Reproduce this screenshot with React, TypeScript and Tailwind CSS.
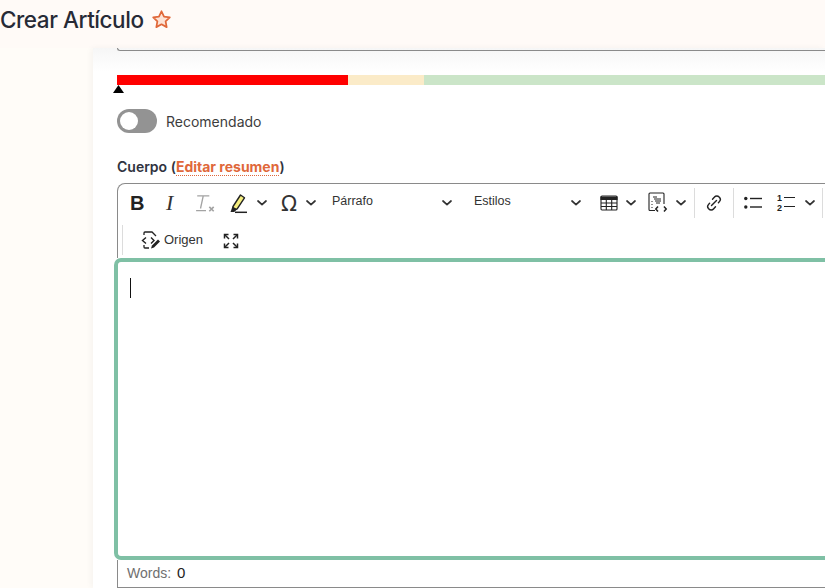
import React from "react";

const Chev = ({ className = "" }: { className?: string }) => (
  <svg width="10" height="6" viewBox="0 0 10 6" className={className} fill="none" stroke="#333" strokeWidth="1.7" strokeLinecap="round" strokeLinejoin="round">
    <path d="M1 1l4 3.6L9 1" />
  </svg>
);

const Sep = () => <div className="w-px h-[30px] bg-[#dcdcdc] shrink-0" />;

export default function App() {
  return (
    <div className="w-[825px] h-[588px] overflow-hidden flex flex-col bg-[#fffcf8] text-[#333] font-['Liberation_Sans',sans-serif]">
      <header className="h-[48px] shrink-0 bg-[#fffaf7] flex items-start gap-[8px] pt-[6px] font-['Inter',sans-serif]">
        <h1 className="text-[22.5px] leading-[27px] font-medium tracking-[-0.45px] text-[#272a36]">Crear Artículo</h1>
        <svg width="21" height="21" viewBox="0 0 24 24" className="mt-[3px] -ml-[0.5px]" fill="#fde3d6" stroke="#e0683a" strokeWidth="2" strokeLinejoin="round">
          <path d="M12 2.6l2.9 6 6.6.9-4.8 4.6 1.2 6.6L12 17.5l-5.9 3.2 1.2-6.6L2.5 9.5l6.6-.9z" />
        </svg>
      </header>
      <div className="flex-1 flex min-h-0">
        <div className="w-[93px] shrink-0" />
        <main className="flex-1 min-w-0 pl-[24px] flex flex-col shadow-[-2px_0_6px_rgba(0,0,0,0.04)] bg-gradient-to-b from-[#f6f6f6] to-white to-[24px]">
          <div className="h-[3px] w-[800px] border-b border-l border-[#8a8a8a] rounded-bl-[6px] shrink-0" />
          <div className="mt-[24px] flex h-[10px] w-[800px] shrink-0">
            <div className="w-[231px] bg-[#ff0000]" />
            <div className="w-[76px] bg-[#fbebc8]" />
            <div className="flex-1 bg-[#cbe5c8]" />
          </div>
          <svg width="11" height="8" viewBox="0 0 11 8" className="ml-[-4px] shrink-0"><path d="M5.5 0L11 8H0z" fill="#000" /></svg>
          <div className="mt-[16px] flex items-center gap-[9px] shrink-0">
            <div className="w-[40px] h-[24px] rounded-full bg-[#939393] flex items-center pl-[3px]">
              <div className="w-[18px] h-[18px] rounded-full bg-white" />
            </div>
            <span className="text-[14px] text-[#3d3d3d] font-['Inter',sans-serif]">Recomendado</span>
          </div>
          <div className="mt-[24px] text-[14px] leading-[20px] font-semibold text-[#2f3340] font-['Inter',sans-serif] shrink-0">
            Cuerpo (<span className="text-[#e0683a] font-bold border-b border-dotted border-[#e0683a]">Editar resumen</span>)
          </div>
          <div className="mt-[6px] w-[800px] shrink-0 flex flex-col">
            <div className="h-[75px] border border-b-0 border-[#8a8a8a] rounded-tl-[8px] flex flex-col">
              <div className="h-[38px] flex items-center text-[#333]">
                <span className="ml-[12px] w-[16px] text-[20px] font-bold text-[#222] leading-none">B</span>
                <span className="ml-[20px] w-[12px] font-['Liberation_Serif',serif] italic text-[22px] leading-none text-[#333]">I</span>
                <svg width="22" height="22" viewBox="0 0 20 20" className="ml-[17px]" fill="none" stroke="#a3a3a3" strokeWidth="1.2">
                  <path d="M2 3.5h11M7.5 3.5L5 15M1 17h9" />
                  <path d="M13 13.5l4 4M17 13.5l-4 4" strokeWidth="1.5" />
                </svg>
                <svg width="22" height="22" viewBox="0 0 22 22" className="ml-[11px]">
                  <path d="M5 14.5L12.5 3l4 2.8-7.3 11-4.2 1.2z" fill="#f5ee7f" stroke="#222" strokeWidth="1.4" strokeLinejoin="round" />
                  <path d="M4.5 14.5l4.7 2.7-3 2.8H2.5z" fill="#222" />
                  <path d="M7 20.3h12" stroke="#222" strokeWidth="1.5" />
                </svg>
                <Chev className="ml-[7px]" />
                <span className="ml-[14px] text-[21px] leading-none text-[#333] font-['DejaVu_Sans',sans-serif] w-[17px] translate-y-[2px]">Ω</span>
                <Chev className="ml-[8px]" />
                <span className="ml-[16px] w-[110px] text-[12.5px] text-[#333] -translate-y-px">Párrafo</span>
                <Chev />
                <span className="ml-[22px] w-[97px] text-[12.5px] text-[#333] -translate-y-px">Estilos</span>
                <Chev />
                <svg width="18" height="18" viewBox="0 0 18 18" className="ml-[19px]" fill="none" stroke="#222" strokeWidth="1.1">
                  <rect x="1" y="2" width="16" height="14" rx="1" />
                  <path d="M1 3h16v2.5H1z" fill="#222" />
                  <path d="M1 9h16M1 12.5h16M6.3 5v11M11.7 5v11" />
                </svg>
                <Chev className="ml-[8px]" />
                <svg width="21" height="21" viewBox="0 0 21 21" className="ml-[11px]" fill="none" stroke="#222" strokeWidth="1.1">
                  <path d="M8 18.5H3a1 1 0 0 1-1-1V2a1 1 0 0 1 1-1h13a1 1 0 0 1 1 1v10" />
                  <path d="M6 5h4M7 7h7M8 9h6M9 11h4" strokeWidth="1" />
                  <path d="M5 9v1M5 12v1M5 15v1" strokeWidth="1" />
                  <path d="M11 14.5L8.8 17l2.2 2.5M17 14.5l2.2 2.5-2.2 2.5" strokeWidth="1.5" />
                </svg>
                <Chev className="ml-[8px]" />
                <div className="ml-[8px]"><Sep /></div>
                <svg width="18" height="18" viewBox="0 0 18 18" className="ml-[10px]" fill="none" stroke="#222" strokeWidth="1.4" strokeLinecap="round">
                  <path d="M7.5 5.2l2-2.2a3 3 0 0 1 4.6 0l.5.5a3 3 0 0 1 0 3.9l-1.2 1.4" />
                  <path d="M10.5 12.8l-2 2.2a3 3 0 0 1-4.6 0l-.5-.5a3 3 0 0 1 0-3.9l1.2-1.4" />
                  <path d="M11.5 6.5l-5 5" />
                </svg>
                <div className="ml-[10px]"><Sep /></div>
                <svg width="18" height="14" viewBox="0 0 18 14" className="ml-[10px]" fill="#222">
                  <circle cx="1.8" cy="2.5" r="1.7" />
                  <circle cx="1.8" cy="11" r="1.7" />
                  <rect x="6" y="1.8" width="12" height="1.4" />
                  <rect x="6" y="10.3" width="12" height="1.4" />
                </svg>
                <div className="ml-[15px] w-[18px] h-[16px] relative">
                  <span className="absolute left-0 top-[-2px] text-[9px] font-bold leading-[10px] text-[#222]">1</span>
                  <span className="absolute left-0 top-[8px] text-[9px] font-bold leading-[10px] text-[#222]">2</span>
                  <div className="absolute left-[7px] top-[2px] w-[11px] h-[1.4px] bg-[#222]" />
                  <div className="absolute left-[7px] top-[11px] w-[11px] h-[1.4px] bg-[#222]" />
                </div>
                <Chev className="ml-[10px]" />
                <div className="ml-[7px]"><Sep /></div>
              </div>
              <div className="h-[37px] flex items-center relative">
                <div className="ml-[4px] w-px h-[30px] bg-[#dcdcdc]" />
                <svg width="20" height="20" viewBox="0 0 20 20" className="ml-[18px]" fill="none" stroke="#222" strokeWidth="1.3">
                  <path d="M3 5V3a1 1 0 0 1 1-1h7l4 4" />
                  <path d="M3 15v2a1 1 0 0 0 1 1h4" />
                  <path d="M5 7.5L1.5 10.5 5 13.5M10 7.5l3 3-3 3" strokeWidth="1.4" />
                  <path d="M10 18.5l1-3 6-6 2 2-6 6z" fill="#222" stroke="none" />
                </svg>
                <span className="ml-[3px] text-[13px] text-[#333]">Origen</span>
                <svg width="16" height="16" viewBox="0 0 16 16" className="ml-[20px] translate-y-px" fill="none" stroke="#222" strokeWidth="1.5">
                  <path d="M1.5 5.5V1.5h4M14.5 5.5V1.5h-4M1.5 10.5v4h4M14.5 10.5v4h-4" />
                  <path d="M2 2l4 4M14 2l-4 4M2 14l4-4M14 14l-4-4" />
                </svg>
              </div>
            </div>
            <div className="h-[302px] ml-[-3px] border-[4px] border-r-0 border-[#7fc0a5] rounded-l-[7px] bg-white pl-[12px] pt-[16px]">
              <div className="w-px h-[20px] bg-[#111]" />
            </div>
            <div className="h-[28px] border-x border-b border-[#8a8a8a] flex items-center pl-[9px] text-[14px] text-[#6f6f6f]">
              Words:<span className="ml-[6px] text-[#222] text-[15px]">0</span>
            </div>
          </div>
        </main>
      </div>
    </div>
  );
}
